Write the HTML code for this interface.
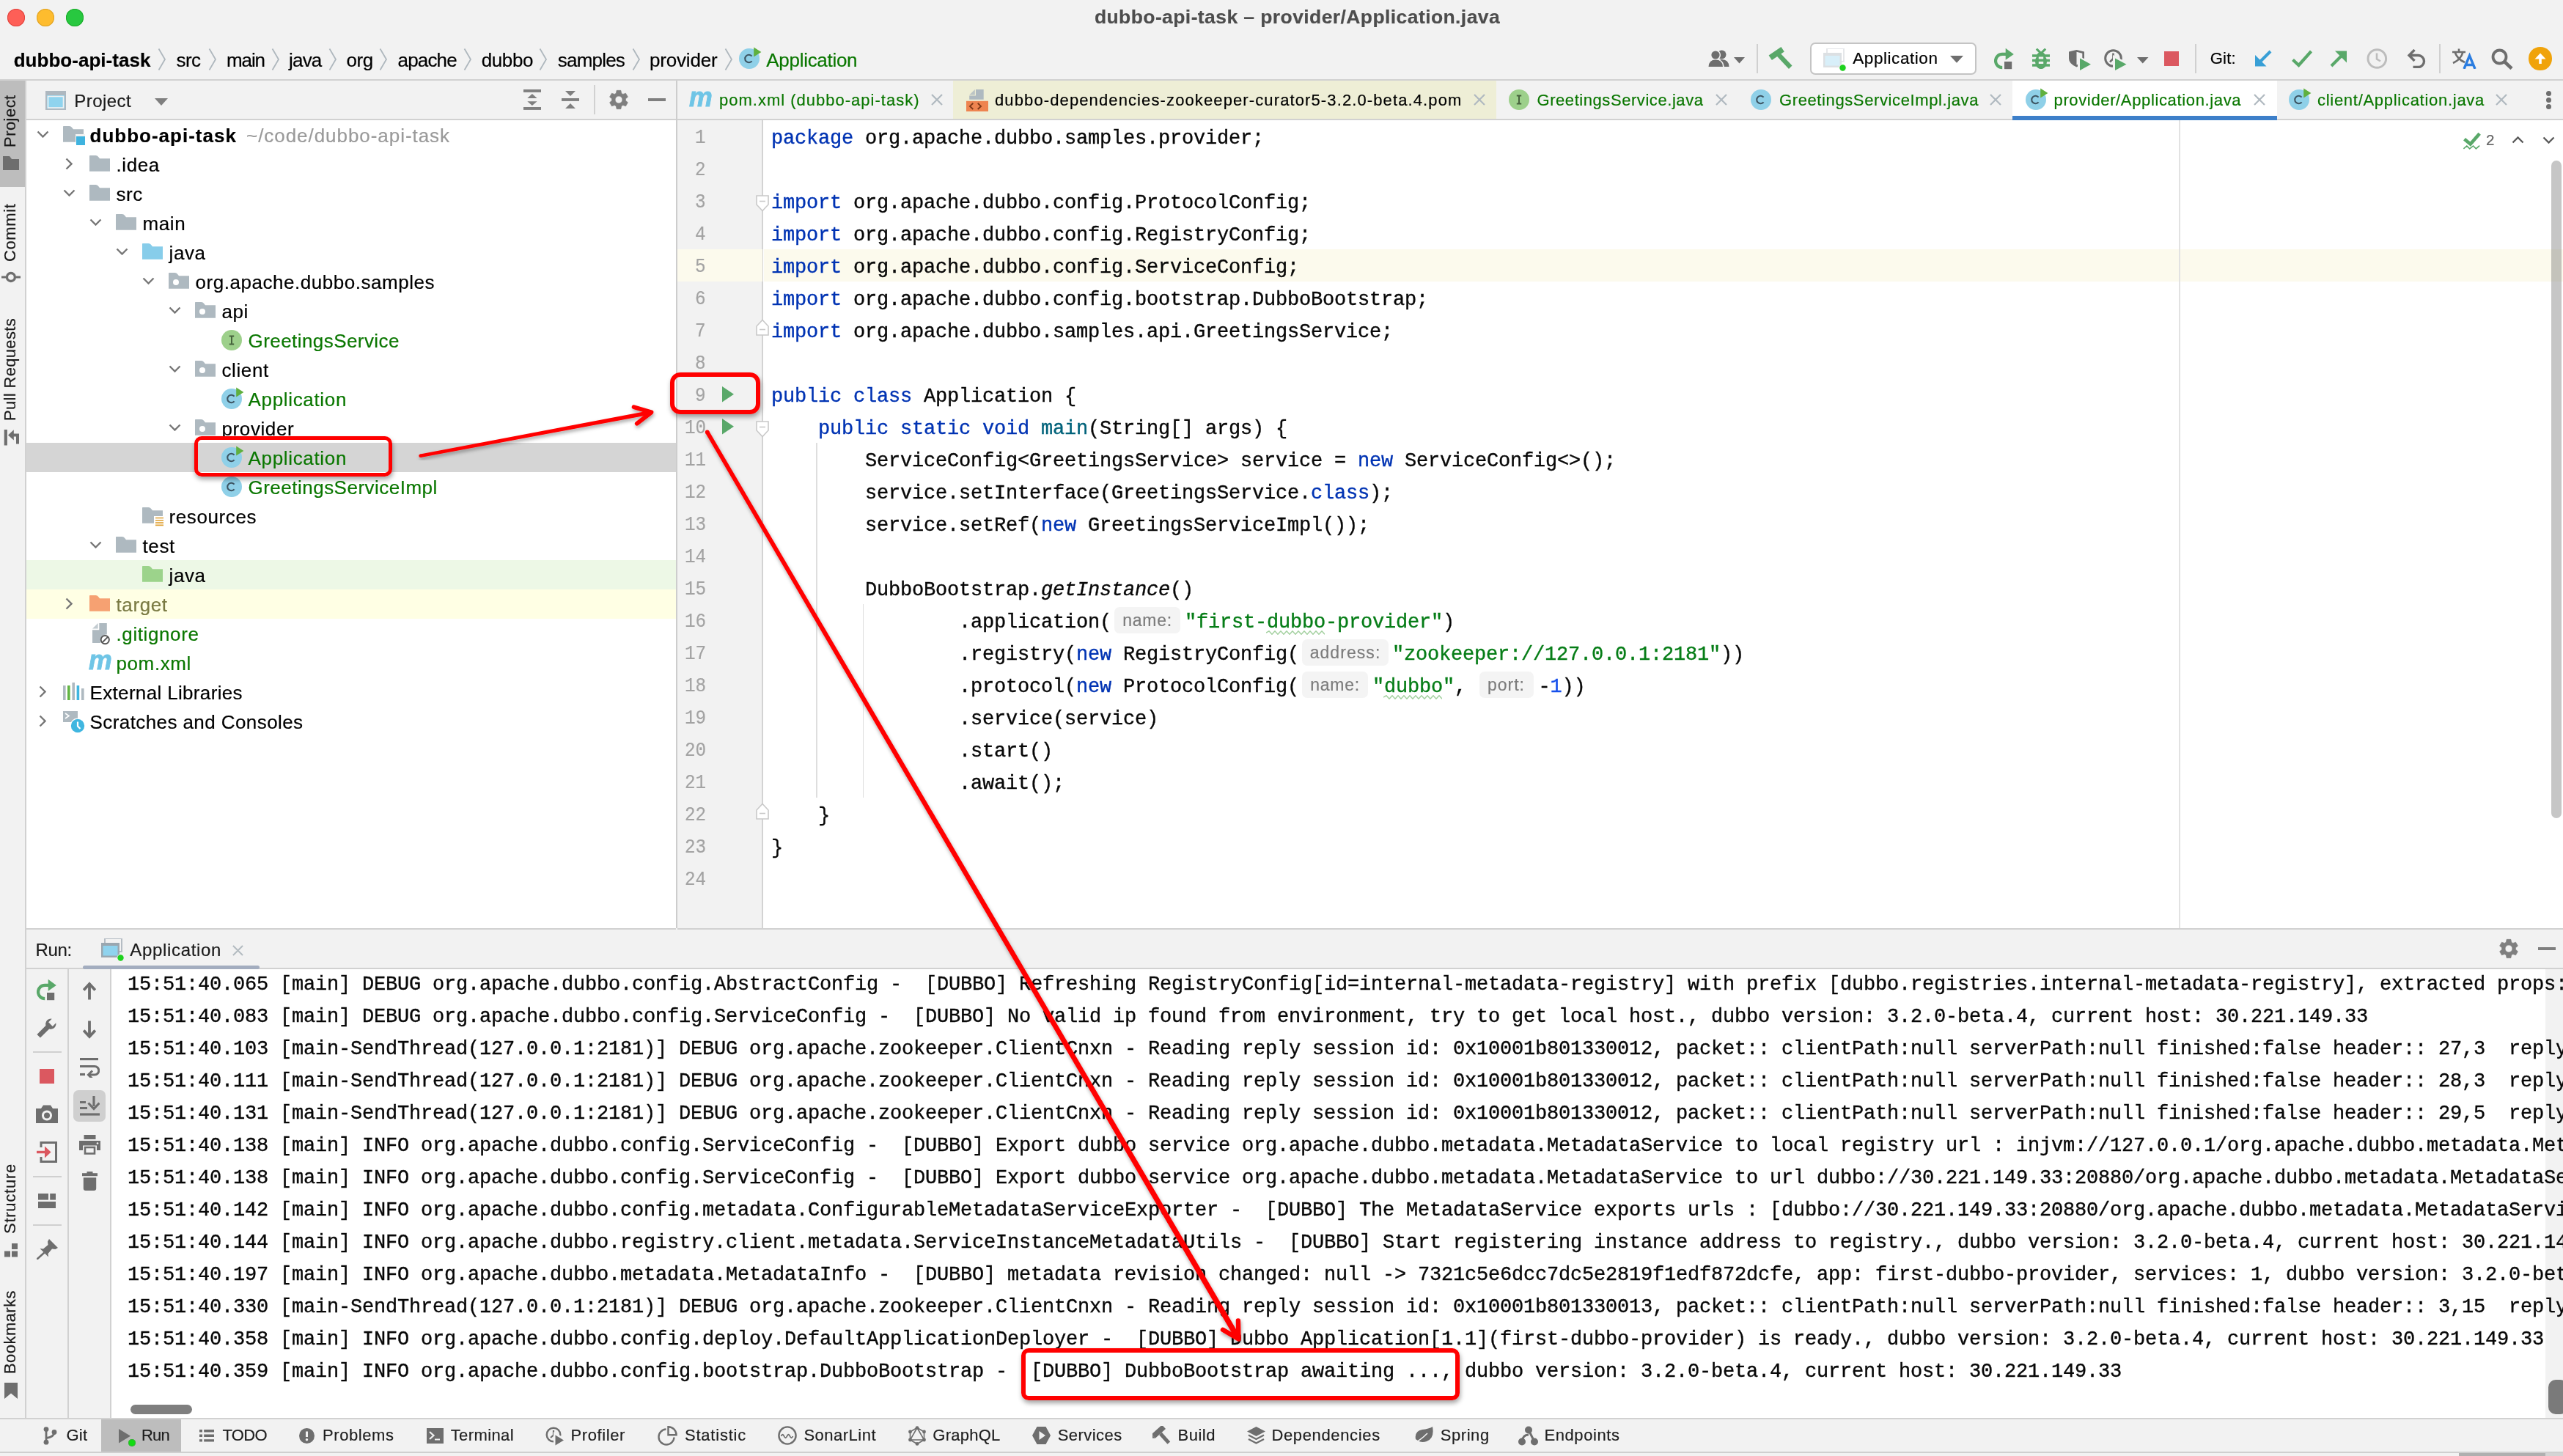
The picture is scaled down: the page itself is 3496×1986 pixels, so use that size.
<!DOCTYPE html>
<html><head><meta charset="utf-8"><title>dubbo-api-task</title>
<style>
html,body{margin:0;padding:0;background:#f2f2f2;}
#r{position:relative;width:3496px;height:1986px;overflow:hidden;background:#f2f2f2;font-family:"Liberation Sans", sans-serif;will-change:transform;}
#r div,#r span,#r svg{position:absolute;}
#r span{white-space:pre;}
.s{font-family:"Liberation Sans", sans-serif;-webkit-text-stroke:0.2px;}
.m{font-family:"Liberation Mono", monospace;-webkit-text-stroke:0.36px;}
</style></head><body><div id="r">
<div style="left:36px;top:164px;width:886px;height:1102px;background:#fff;"></div>
<div style="left:924px;top:164px;width:2572px;height:1102px;background:#fff;"></div>
<div style="left:152px;top:1322px;width:3344px;height:612px;background:#fff;"></div>
<div style="left:10px;top:12px;width:24px;height:24px;border-radius:50%;background:#fe5f57;box-shadow:inset 0 0 0 1px #e0443e;"></div>
<div style="left:50px;top:12px;width:24px;height:24px;border-radius:50%;background:#febc2e;box-shadow:inset 0 0 0 1px #dea123;"></div>
<div style="left:90px;top:12px;width:24px;height:24px;border-radius:50%;background:#28c840;box-shadow:inset 0 0 0 1px #1aab29;"></div>
<span class="s" style="font-size:26.5px;line-height:26.5px;color:#4d4d4d;letter-spacing:0.410px;font-weight:bold;left:1492.9px;top:9.77px;">dubbo-api-task – provider/Application.java</span>
<span class="s" style="font-size:26px;line-height:26px;color:#000;letter-spacing:0.033px;font-weight:bold;left:18.7px;top:68.69px;">dubbo-api-task</span>
<span class="s" style="font-size:26px;line-height:26px;color:#000;letter-spacing:-0.557px;left:240.5px;top:68.69px;">src</span>
<span class="s" style="font-size:26px;line-height:26px;color:#000;letter-spacing:-1.090px;left:309px;top:68.69px;">main</span>
<span class="s" style="font-size:26px;line-height:26px;color:#000;letter-spacing:-0.801px;left:394px;top:68.69px;">java</span>
<span class="s" style="font-size:26px;line-height:26px;color:#000;letter-spacing:-0.459px;left:472.5px;top:68.69px;">org</span>
<span class="s" style="font-size:26px;line-height:26px;color:#000;letter-spacing:-0.819px;left:542.5px;top:68.69px;">apache</span>
<span class="s" style="font-size:26px;line-height:26px;color:#000;letter-spacing:-0.422px;left:656.8px;top:68.69px;">dubbo</span>
<span class="s" style="font-size:26px;line-height:26px;color:#000;letter-spacing:-0.804px;left:760.8px;top:68.69px;">samples</span>
<span class="s" style="font-size:26px;line-height:26px;color:#000;letter-spacing:-0.180px;left:886px;top:68.69px;">provider</span>
<svg style="left:215px;top:65px;" width="12" height="32" viewBox="0 0 12 32"><path d="M1.5 1.5 L10 16 L1.5 30.5" fill="none" stroke="#aeb7bd" stroke-width="1.8"/></svg>
<svg style="left:283.5px;top:65px;" width="12" height="32" viewBox="0 0 12 32"><path d="M1.5 1.5 L10 16 L1.5 30.5" fill="none" stroke="#aeb7bd" stroke-width="1.8"/></svg>
<svg style="left:369.5px;top:65px;" width="12" height="32" viewBox="0 0 12 32"><path d="M1.5 1.5 L10 16 L1.5 30.5" fill="none" stroke="#aeb7bd" stroke-width="1.8"/></svg>
<svg style="left:447.5px;top:65px;" width="12" height="32" viewBox="0 0 12 32"><path d="M1.5 1.5 L10 16 L1.5 30.5" fill="none" stroke="#aeb7bd" stroke-width="1.8"/></svg>
<svg style="left:517px;top:65px;" width="12" height="32" viewBox="0 0 12 32"><path d="M1.5 1.5 L10 16 L1.5 30.5" fill="none" stroke="#aeb7bd" stroke-width="1.8"/></svg>
<svg style="left:631.5px;top:65px;" width="12" height="32" viewBox="0 0 12 32"><path d="M1.5 1.5 L10 16 L1.5 30.5" fill="none" stroke="#aeb7bd" stroke-width="1.8"/></svg>
<svg style="left:734.5px;top:65px;" width="12" height="32" viewBox="0 0 12 32"><path d="M1.5 1.5 L10 16 L1.5 30.5" fill="none" stroke="#aeb7bd" stroke-width="1.8"/></svg>
<svg style="left:861.5px;top:65px;" width="12" height="32" viewBox="0 0 12 32"><path d="M1.5 1.5 L10 16 L1.5 30.5" fill="none" stroke="#aeb7bd" stroke-width="1.8"/></svg>
<svg style="left:987.5px;top:65px;" width="12" height="32" viewBox="0 0 12 32"><path d="M1.5 1.5 L10 16 L1.5 30.5" fill="none" stroke="#aeb7bd" stroke-width="1.8"/></svg>
<svg style="left:1006px;top:63px;" width="34" height="34" viewBox="0 0 34 34"><circle cx="16" cy="17" r="14" fill="#8fd0e8"/><path d="M19.6 13.6 A5.3 5.3 0 1 0 19.6 20.4" fill="none" stroke="#3d5563" stroke-width="2.1"/><path d="M22.2 1.6 L32.4 8 L22.2 14.4 Z" fill="#5fb03f"/></svg>
<span class="s" style="font-size:26px;line-height:26px;color:#0a7700;letter-spacing:-0.291px;left:1045.3px;top:68.69px;">Application</span>
<div style="left:0px;top:108px;width:3496px;height:2px;background:#d1d1d1;"></div>
<div style="left:0px;top:110px;width:34px;height:1825px;background:#f2f2f2;"></div>
<div style="left:34px;top:110px;width:2px;height:1825px;background:#d1d1d1;"></div>
<div style="left:0px;top:110px;width:34px;height:145px;background:#bdbdbd;"></div>
<span class="s" style="font-size:22px;line-height:22px;color:#1a1a1a;letter-spacing:0.459px;left:22.4px;top:200.6px;transform-origin:0 0;transform:rotate(-90deg) translate(0,-18.62px);">Project</span>
<span class="s" style="font-size:22px;line-height:22px;color:#1a1a1a;letter-spacing:0.620px;left:22.4px;top:356.5px;transform-origin:0 0;transform:rotate(-90deg) translate(0,-18.62px);">Commit</span>
<span class="s" style="font-size:22px;line-height:22px;color:#1a1a1a;letter-spacing:0.327px;left:22.4px;top:574px;transform-origin:0 0;transform:rotate(-90deg) translate(0,-18.62px);">Pull Requests</span>
<span class="s" style="font-size:22px;line-height:22px;color:#1a1a1a;letter-spacing:0.748px;left:22.4px;top:1682.5px;transform-origin:0 0;transform:rotate(-90deg) translate(0,-18.62px);">Structure</span>
<span class="s" style="font-size:22px;line-height:22px;color:#1a1a1a;letter-spacing:0.439px;left:22.4px;top:1874px;transform-origin:0 0;transform:rotate(-90deg) translate(0,-18.62px);">Bookmarks</span>
<svg style="left:4px;top:213px;" width="24" height="20" viewBox="0 0 24 20"><path d="M0 0 H9 L12 4 H22 V19 H0 Z" fill="#6e6e6e"/></svg>
<svg style="left:1px;top:369px;" width="30" height="18" viewBox="0 0 30 18"><circle cx="13.9" cy="9" r="5.5" fill="none" stroke="#6e6e6e" stroke-width="3.4"/><path d="M1 9 H7 M21 9 H27" stroke="#6e6e6e" stroke-width="3.2"/></svg>
<svg style="left:5px;top:586px;" width="24" height="23" viewBox="0 0 24 23"><rect x="0.7" y="0" width="4.2" height="21.5" fill="#6e6e6e"/><path d="M6 7.4 L13.8 0.2 V14.6 Z" fill="#6e6e6e"/><path d="M13 7.4 H19 V19.5" fill="none" stroke="#6e6e6e" stroke-width="4"/></svg>
<svg style="left:6px;top:1696px;" width="19" height="19" viewBox="0 0 19 19"><rect x="10" y="0" width="8" height="8" fill="#6e6e6e"/><rect x="0" y="10.5" width="8" height="8" fill="#6e6e6e"/><rect x="10" y="10.5" width="8" height="8" fill="#6e6e6e"/></svg>
<svg style="left:6px;top:1886px;" width="18" height="22" viewBox="0 0 18 22"><path d="M0 0 H18 V22 L9 14.5 L0 22 Z" fill="#6e6e6e"/></svg>
<div style="left:36px;top:110px;width:886px;height:52px;background:#f2f2f2;"></div>
<div style="left:36px;top:162px;width:886px;height:2px;background:#d1d1d1;"></div>
<div style="left:922px;top:110px;width:2px;height:1156px;background:#cdcdcd;"></div>
<svg style="left:62px;top:124px;" width="28" height="26" viewBox="0 0 28 26"><rect x="1" y="1" width="26" height="24" fill="#8fd3ee" stroke="#aeb8c0" stroke-width="2"/><rect x="1" y="1" width="26" height="5" fill="#aeb8c0"/><rect x="3.5" y="7.5" width="21" height="15.5" fill="none" stroke="#f2f2f2" stroke-width="1.6"/></svg>
<span class="s" style="font-size:24px;line-height:24px;color:#1a1a1a;letter-spacing:0.471px;left:101.2px;top:125.58px;">Project</span>
<svg style="left:211px;top:134px;" width="18" height="10" viewBox="0 0 18 10"><path d="M0 0 H18 L9 10 Z" fill="#7f7f7f"/></svg>
<svg style="left:714px;top:122px;" width="24" height="28" viewBox="0 0 24 28"><rect x="0" y="0" width="24" height="3.9" fill="#7f7f7f"/><rect x="0" y="24" width="24" height="3.9" fill="#7f7f7f"/><path d="M11.9 6 L18.6 11.9 H5.3 Z M11.9 21.9 L18.6 16.2 H5.3 Z" fill="#7f7f7f"/></svg>
<svg style="left:766px;top:122px;" width="24" height="28" viewBox="0 0 24 28"><rect x="0" y="12" width="24" height="3.9" fill="#7f7f7f"/><path d="M12 8.9 L19 2 H5 Z M12 19.1 L19 25.9 H5 Z" fill="#7f7f7f"/></svg>
<div style="left:810px;top:116px;width:2px;height:40px;background:#d1d1d1;"></div>
<svg style="left:830px;top:121.9px;" width="28" height="28" viewBox="0 0 28 28"><path d="M10.30 5.25 L11.12 1.32 L16.88 1.32 L17.70 5.25 L19.73 6.42 L23.54 5.17 L26.42 10.15 L23.43 12.83 L23.43 15.17 L26.42 17.85 L23.54 22.83 L19.73 21.58 L17.70 22.75 L16.88 26.68 L11.12 26.68 L10.30 22.75 L8.27 21.58 L4.46 22.83 L1.58 17.85 L4.57 15.17 L4.57 12.83 L1.58 10.15 L4.46 5.17 L8.27 6.42 Z M18.9 14 A4.9 4.9 0 1 0 9.1 14 A4.9 4.9 0 1 0 18.9 14 Z" fill="#7f7f7f" fill-rule="evenodd" stroke="#7f7f7f" stroke-width="0.6" stroke-linejoin="round"/></svg>
<div style="left:884px;top:134px;width:24px;height:4px;background:#7f7f7f;"></div>
<div style="left:36px;top:604px;width:886px;height:40px;background:#d5d5d5;"></div>
<div style="left:36px;top:764px;width:886px;height:40px;background:#edf8e6;"></div>
<div style="left:36px;top:804px;width:886px;height:40px;background:#ffffe4;"></div>
<svg style="left:49.5px;top:178px;" width="17" height="10" viewBox="0 0 17 10"><path d="M1.5 1.5 L8.5 8.5 L15.5 1.5" fill="none" stroke="#767676" stroke-width="2.4"/></svg>
<svg style="left:86px;top:172px;" width="31" height="27" viewBox="0 0 31 27"><path d="M0 0.8 Q0 0 0.8 0 H8.5 Q10.8 0 12.2 2 L14 4.2 H28 V21.8 H0 Z" fill="#aeb9c0"/><rect x="17" y="11" width="13" height="13" fill="#f2f2f2"/><rect x="18" y="14" width="12" height="12" fill="#3fb3df"/></svg>
<span class="s" style="font-size:26px;line-height:26px;color:#000;letter-spacing:1.004px;font-weight:bold;left:122.5px;top:171.99px;">dubbo-api-task</span>
<svg style="left:89px;top:215px;" width="10" height="17" viewBox="0 0 10 17"><path d="M1.5 1.5 L8.5 8.5 L1.5 15.5" fill="none" stroke="#767676" stroke-width="2.4"/></svg>
<svg style="left:122px;top:212px;" width="28" height="22" viewBox="0 0 28 22"><path d="M0 0.8 Q0 0 0.8 0 H8.5 Q10.8 0 12.2 2 L14 4.2 H28 V21.8 H0 Z" fill="#aeb9c0"/></svg>
<span class="s" style="font-size:26px;line-height:26px;color:#000;left:158.5px;top:211.99px;letter-spacing:0.6px;">.idea</span>
<svg style="left:85.5px;top:258px;" width="17" height="10" viewBox="0 0 17 10"><path d="M1.5 1.5 L8.5 8.5 L15.5 1.5" fill="none" stroke="#767676" stroke-width="2.4"/></svg>
<svg style="left:122px;top:252px;" width="28" height="22" viewBox="0 0 28 22"><path d="M0 0.8 Q0 0 0.8 0 H8.5 Q10.8 0 12.2 2 L14 4.2 H28 V21.8 H0 Z" fill="#aeb9c0"/></svg>
<span class="s" style="font-size:26px;line-height:26px;color:#000;left:158.5px;top:251.99px;letter-spacing:0.6px;">src</span>
<svg style="left:121.5px;top:298px;" width="17" height="10" viewBox="0 0 17 10"><path d="M1.5 1.5 L8.5 8.5 L15.5 1.5" fill="none" stroke="#767676" stroke-width="2.4"/></svg>
<svg style="left:158px;top:292px;" width="28" height="22" viewBox="0 0 28 22"><path d="M0 0.8 Q0 0 0.8 0 H8.5 Q10.8 0 12.2 2 L14 4.2 H28 V21.8 H0 Z" fill="#aeb9c0"/></svg>
<span class="s" style="font-size:26px;line-height:26px;color:#000;left:194.5px;top:291.99px;letter-spacing:0.6px;">main</span>
<svg style="left:157.5px;top:338px;" width="17" height="10" viewBox="0 0 17 10"><path d="M1.5 1.5 L8.5 8.5 L15.5 1.5" fill="none" stroke="#767676" stroke-width="2.4"/></svg>
<svg style="left:194px;top:332px;" width="28" height="22" viewBox="0 0 28 22"><path d="M0 0.8 Q0 0 0.8 0 H8.5 Q10.8 0 12.2 2 L14 4.2 H28 V21.8 H0 Z" fill="#87cdea"/></svg>
<span class="s" style="font-size:26px;line-height:26px;color:#000;left:230.5px;top:331.99px;letter-spacing:0.6px;">java</span>
<svg style="left:193.5px;top:378px;" width="17" height="10" viewBox="0 0 17 10"><path d="M1.5 1.5 L8.5 8.5 L15.5 1.5" fill="none" stroke="#767676" stroke-width="2.4"/></svg>
<svg style="left:230px;top:372px;" width="28" height="22" viewBox="0 0 28 22"><path d="M0 0.8 Q0 0 0.8 0 H8.5 Q10.8 0 12.2 2 L14 4.2 H28 V21.8 H0 Z" fill="#aeb9c0"/><circle cx="10" cy="13" r="4" fill="#fff"/></svg>
<span class="s" style="font-size:26px;line-height:26px;color:#000;letter-spacing:0.535px;left:266.5px;top:371.99px;">org.apache.dubbo.samples</span>
<svg style="left:229.5px;top:418px;" width="17" height="10" viewBox="0 0 17 10"><path d="M1.5 1.5 L8.5 8.5 L15.5 1.5" fill="none" stroke="#767676" stroke-width="2.4"/></svg>
<svg style="left:266px;top:412px;" width="28" height="22" viewBox="0 0 28 22"><path d="M0 0.8 Q0 0 0.8 0 H8.5 Q10.8 0 12.2 2 L14 4.2 H28 V21.8 H0 Z" fill="#aeb9c0"/><circle cx="10" cy="13" r="4" fill="#fff"/></svg>
<span class="s" style="font-size:26px;line-height:26px;color:#000;left:302.5px;top:411.99px;letter-spacing:0.6px;">api</span>
<svg style="left:300.2px;top:446.7px;" width="34" height="34" viewBox="0 0 34 34"><circle cx="16" cy="17" r="14" fill="#9dd08b"/><path d="M12.8 11.6h6.4M12.8 22.4h6.4M16 11.6v10.8" stroke="#47633d" stroke-width="2" fill="none"/></svg>
<span class="s" style="font-size:26px;line-height:26px;color:#0a7700;letter-spacing:0.436px;left:338.5px;top:451.99px;">GreetingsService</span>
<svg style="left:229.5px;top:498px;" width="17" height="10" viewBox="0 0 17 10"><path d="M1.5 1.5 L8.5 8.5 L15.5 1.5" fill="none" stroke="#767676" stroke-width="2.4"/></svg>
<svg style="left:266px;top:492px;" width="28" height="22" viewBox="0 0 28 22"><path d="M0 0.8 Q0 0 0.8 0 H8.5 Q10.8 0 12.2 2 L14 4.2 H28 V21.8 H0 Z" fill="#aeb9c0"/><circle cx="10" cy="13" r="4" fill="#fff"/></svg>
<span class="s" style="font-size:26px;line-height:26px;color:#000;left:302.5px;top:491.99px;letter-spacing:0.6px;">client</span>
<svg style="left:300.2px;top:526.7px;" width="34" height="34" viewBox="0 0 34 34"><circle cx="16" cy="17" r="14" fill="#8fd0e8"/><path d="M19.6 13.6 A5.3 5.3 0 1 0 19.6 20.4" fill="none" stroke="#3d5563" stroke-width="2.1"/><path d="M22.2 1.6 L32.4 8 L22.2 14.4 Z" fill="#5fb03f"/></svg>
<span class="s" style="font-size:26px;line-height:26px;color:#0a7700;letter-spacing:0.672px;left:338.5px;top:531.99px;">Application</span>
<svg style="left:229.5px;top:578px;" width="17" height="10" viewBox="0 0 17 10"><path d="M1.5 1.5 L8.5 8.5 L15.5 1.5" fill="none" stroke="#767676" stroke-width="2.4"/></svg>
<svg style="left:266px;top:572px;" width="28" height="22" viewBox="0 0 28 22"><path d="M0 0.8 Q0 0 0.8 0 H8.5 Q10.8 0 12.2 2 L14 4.2 H28 V21.8 H0 Z" fill="#aeb9c0"/><circle cx="10" cy="13" r="4" fill="#fff"/></svg>
<span class="s" style="font-size:26px;line-height:26px;color:#000;left:302.5px;top:571.99px;letter-spacing:0.6px;">provider</span>
<svg style="left:300.2px;top:606.7px;" width="34" height="34" viewBox="0 0 34 34"><circle cx="16" cy="17" r="14" fill="#8fd0e8"/><path d="M19.6 13.6 A5.3 5.3 0 1 0 19.6 20.4" fill="none" stroke="#3d5563" stroke-width="2.1"/><path d="M22.2 1.6 L32.4 8 L22.2 14.4 Z" fill="#5fb03f"/></svg>
<span class="s" style="font-size:26px;line-height:26px;color:#0a7700;letter-spacing:0.672px;left:338.5px;top:611.99px;">Application</span>
<svg style="left:300.2px;top:646.7px;" width="34" height="34" viewBox="0 0 34 34"><circle cx="16" cy="17" r="14" fill="#8fd0e8"/><path d="M19.6 13.6 A5.3 5.3 0 1 0 19.6 20.4" fill="none" stroke="#3d5563" stroke-width="2.1"/></svg>
<span class="s" style="font-size:26px;line-height:26px;color:#0a7700;letter-spacing:0.488px;left:338.5px;top:651.99px;">GreetingsServiceImpl</span>
<svg style="left:194px;top:692px;" width="31" height="27" viewBox="0 0 31 27"><path d="M0 0.8 Q0 0 0.8 0 H8.5 Q10.8 0 12.2 2 L14 4.2 H28 V21.8 H0 Z" fill="#aeb9c0"/><rect x="16" y="12" width="14" height="14" fill="#fff"/><g stroke="#e0a030" stroke-width="1.6"><path d="M18 14.5h11M18 17.8h11M18 21.1h11M18 24.4h11"/></g></svg>
<span class="s" style="font-size:26px;line-height:26px;color:#000;left:230.5px;top:691.99px;letter-spacing:0.6px;">resources</span>
<svg style="left:121.5px;top:738px;" width="17" height="10" viewBox="0 0 17 10"><path d="M1.5 1.5 L8.5 8.5 L15.5 1.5" fill="none" stroke="#767676" stroke-width="2.4"/></svg>
<svg style="left:158px;top:732px;" width="28" height="22" viewBox="0 0 28 22"><path d="M0 0.8 Q0 0 0.8 0 H8.5 Q10.8 0 12.2 2 L14 4.2 H28 V21.8 H0 Z" fill="#aeb9c0"/></svg>
<span class="s" style="font-size:26px;line-height:26px;color:#000;left:194.5px;top:731.99px;letter-spacing:0.6px;">test</span>
<svg style="left:194px;top:772px;" width="28" height="22" viewBox="0 0 28 22"><path d="M0 0.8 Q0 0 0.8 0 H8.5 Q10.8 0 12.2 2 L14 4.2 H28 V21.8 H0 Z" fill="#9cd38b"/></svg>
<span class="s" style="font-size:26px;line-height:26px;color:#000;left:230.5px;top:771.99px;letter-spacing:0.6px;">java</span>
<svg style="left:89px;top:815px;" width="10" height="17" viewBox="0 0 10 17"><path d="M1.5 1.5 L8.5 8.5 L1.5 15.5" fill="none" stroke="#767676" stroke-width="2.4"/></svg>
<svg style="left:122px;top:812px;" width="28" height="22" viewBox="0 0 28 22"><path d="M0 0.8 Q0 0 0.8 0 H8.5 Q10.8 0 12.2 2 L14 4.2 H28 V21.8 H0 Z" fill="#f6a172"/></svg>
<span class="s" style="font-size:26px;line-height:26px;color:#7a7a43;left:158.5px;top:811.99px;letter-spacing:0.6px;">target</span>
<svg style="left:126px;top:850px;" width="28" height="30" viewBox="0 0 28 30"><path d="M9.3 0 H19.8 V15.5 A8.3 8.3 0 0 0 11.5 27 H0 V9.3 H9.3 Z" fill="#aeb9c0"/><path d="M0 7.6 L7.6 0 V7.6 Z" fill="#aeb9c0" opacity="0.75"/><circle cx="17.3" cy="22.6" r="5.6" fill="none" stroke="#555" stroke-width="1.9"/><path d="M13.4 26.5 L21.2 18.7" stroke="#555" stroke-width="1.9"/></svg>
<span class="s" style="font-size:26px;line-height:26px;color:#0a7700;left:158.5px;top:851.99px;letter-spacing:0.6px;">.gitignore</span>
<span class="s" style="font-size:37.5px;line-height:37.5px;color:#6fc5e6;font-weight:bold;font-style:italic;left:120.5px;top:882.46px;transform-origin:0 0;transform:scaleX(0.95);-webkit-text-stroke:0.9px #6fc5e6;">m</span>
<span class="s" style="font-size:26px;line-height:26px;color:#0a7700;left:158.5px;top:891.99px;letter-spacing:0.6px;">pom.xml</span>
<svg style="left:53px;top:935px;" width="10" height="17" viewBox="0 0 10 17"><path d="M1.5 1.5 L8.5 8.5 L1.5 15.5" fill="none" stroke="#767676" stroke-width="2.4"/></svg>
<svg style="left:86px;top:931px;" width="29" height="24" viewBox="0 0 29 24"><rect x="0" y="4" width="3.6" height="20" fill="#aeb9c0"/><rect x="6" y="4" width="3.6" height="20" fill="#62b543"/><rect x="12.4" y="0" width="3.6" height="24" fill="#aeb9c0"/><rect x="18.6" y="4" width="3.6" height="20" fill="#40b6e0"/><rect x="25" y="8" width="3.6" height="16" fill="#aeb9c0"/></svg>
<span class="s" style="font-size:26px;line-height:26px;color:#000;letter-spacing:0.338px;left:122.5px;top:931.99px;">External Libraries</span>
<svg style="left:53px;top:975px;" width="10" height="17" viewBox="0 0 10 17"><path d="M1.5 1.5 L8.5 8.5 L1.5 15.5" fill="none" stroke="#767676" stroke-width="2.4"/></svg>
<svg style="left:86px;top:970px;" width="31" height="31" viewBox="0 0 31 31"><rect x="0" y="0" width="20" height="15" fill="#aeb9c0"/><path d="M3 3 L8 6.5 L3 10" fill="none" stroke="#fff" stroke-width="1.6"/><circle cx="20" cy="20" r="10.5" fill="#fff"/><circle cx="20" cy="20" r="9.2" fill="#40b6e0"/><path d="M20 14.5 V20.5 L23.5 24" fill="none" stroke="#fff" stroke-width="2.2"/></svg>
<span class="s" style="font-size:26px;line-height:26px;color:#000;letter-spacing:0.417px;left:122.5px;top:971.99px;">Scratches and Consoles</span>
<span class="s" style="font-size:26px;line-height:26px;color:#9a9a9a;letter-spacing:0.952px;left:336px;top:171.99px;">~/code/dubbo-api-task</span>
<div style="left:924px;top:110px;width:2572px;height:52px;background:#f2f2f2;"></div>
<span class="s" style="font-size:37.5px;line-height:37.5px;color:#6fc5e6;font-weight:bold;font-style:italic;left:939.5px;top:114.46px;transform-origin:0 0;transform:scaleX(0.95);-webkit-text-stroke:0.9px #6fc5e6;">m</span>
<span class="s" style="font-size:22px;line-height:22px;color:#0a7700;letter-spacing:1.003px;left:981px;top:126.38px;">pom.xml (dubbo-api-task)</span>
<svg style="left:1270px;top:128px;" width="16" height="16" viewBox="0 0 16 16"><path d="M1 1 L15 15 M15 1 L1 15" stroke="#b0b9c0" stroke-width="2.2" fill="none"/></svg>
<div style="left:1300px;top:110px;width:741px;height:52px;background:#eeeed6;"></div>
<svg style="left:1318px;top:122px;" width="30" height="30" viewBox="0 0 30 30"><path d="M13 0 H23.7 V13.7 H4.2 V8.6 H13 Z" fill="#aeb9c0"/><path d="M4.2 7.4 L11.8 0 V7.4 Z" fill="#aeb9c0" opacity="0.8"/><rect x="0" y="15.8" width="30" height="14.2" fill="#ee8450"/><path d="M9.3 18.8 L5 22.9 L9.3 27 M15.7 18.8 L20 22.9 L15.7 27" fill="none" stroke="#6b2c0e" stroke-width="1.9" opacity="0.85"/></svg>
<span class="s" style="font-size:22px;line-height:22px;color:#000;letter-spacing:1.115px;left:1357px;top:126.38px;">dubbo-dependencies-zookeeper-curator5-3.2.0-beta.4.pom</span>
<svg style="left:2010px;top:128px;" width="16" height="16" viewBox="0 0 16 16"><path d="M1 1 L15 15 M15 1 L1 15" stroke="#b0b9c0" stroke-width="2.2" fill="none"/></svg>
<svg style="left:2055.7px;top:119px;" width="34" height="34" viewBox="0 0 34 34"><circle cx="16" cy="17" r="14" fill="#9dd08b"/><path d="M12.8 11.6h6.4M12.8 22.4h6.4M16 11.6v10.8" stroke="#47633d" stroke-width="2" fill="none"/></svg>
<span class="s" style="font-size:22px;line-height:22px;color:#0a7700;letter-spacing:0.561px;left:2096.5px;top:126.38px;">GreetingsService.java</span>
<svg style="left:2340px;top:128px;" width="16" height="16" viewBox="0 0 16 16"><path d="M1 1 L15 15 M15 1 L1 15" stroke="#b0b9c0" stroke-width="2.2" fill="none"/></svg>
<svg style="left:2386px;top:119px;" width="34" height="34" viewBox="0 0 34 34"><circle cx="16" cy="17" r="14" fill="#8fd0e8"/><path d="M19.6 13.6 A5.3 5.3 0 1 0 19.6 20.4" fill="none" stroke="#3d5563" stroke-width="2.1"/></svg>
<span class="s" style="font-size:22px;line-height:22px;color:#0a7700;letter-spacing:0.609px;left:2427px;top:126.38px;">GreetingsServiceImpl.java</span>
<svg style="left:2714px;top:128px;" width="16" height="16" viewBox="0 0 16 16"><path d="M1 1 L15 15 M15 1 L1 15" stroke="#b0b9c0" stroke-width="2.2" fill="none"/></svg>
<div style="left:2745px;top:110px;width:361px;height:52px;background:#fff;"></div>
<svg style="left:2760.5px;top:119px;" width="34" height="34" viewBox="0 0 34 34"><circle cx="16" cy="17" r="14" fill="#8fd0e8"/><path d="M19.6 13.6 A5.3 5.3 0 1 0 19.6 20.4" fill="none" stroke="#3d5563" stroke-width="2.1"/><path d="M22.2 1.6 L32.4 8 L22.2 14.4 Z" fill="#5fb03f"/></svg>
<span class="s" style="font-size:22px;line-height:22px;color:#0a7700;letter-spacing:0.640px;left:2801.5px;top:126.38px;">provider/Application.java</span>
<svg style="left:3074.3px;top:128px;" width="16" height="16" viewBox="0 0 16 16"><path d="M1 1 L15 15 M15 1 L1 15" stroke="#b0b9c0" stroke-width="2.2" fill="none"/></svg>
<svg style="left:3120px;top:119px;" width="34" height="34" viewBox="0 0 34 34"><circle cx="16" cy="17" r="14" fill="#8fd0e8"/><path d="M19.6 13.6 A5.3 5.3 0 1 0 19.6 20.4" fill="none" stroke="#3d5563" stroke-width="2.1"/><path d="M22.2 1.6 L32.4 8 L22.2 14.4 Z" fill="#5fb03f"/></svg>
<span class="s" style="font-size:22px;line-height:22px;color:#0a7700;letter-spacing:0.714px;left:3161px;top:126.38px;">client/Application.java</span>
<svg style="left:3404.3px;top:128px;" width="16" height="16" viewBox="0 0 16 16"><path d="M1 1 L15 15 M15 1 L1 15" stroke="#b0b9c0" stroke-width="2.2" fill="none"/></svg>
<div style="left:3473.3px;top:124.0px;width:7px;height:7px;border-radius:50%;background:#6e6e6e;"></div>
<div style="left:3473.3px;top:132.8px;width:7px;height:7px;border-radius:50%;background:#6e6e6e;"></div>
<div style="left:3473.3px;top:141.5px;width:7px;height:7px;border-radius:50%;background:#6e6e6e;"></div>
<div style="left:924px;top:162px;width:2572px;height:2px;background:#d1d1d1;"></div>
<div style="left:2745px;top:158px;width:361px;height:6px;background:#3d7fc9;"></div>
<div style="left:924px;top:164px;width:116px;height:1102px;background:#f2f2f2;"></div>
<div style="left:1039px;top:164px;width:2px;height:1102px;background:#d3d3d3;"></div>
<div style="left:1042px;top:340px;width:2454px;height:44px;background:#fcfaed;"></div>
<div style="left:924px;top:340px;width:116px;height:44px;background:#fcfaed;"></div>
<div style="left:2972px;top:164px;width:2px;height:1102px;background:#e2e2e2;"></div>
<div style="left:1113px;top:604px;width:1.6px;height:484px;background:#dedede;"></div>
<div style="left:1176.5px;top:824px;width:1.6px;height:264px;background:#dedede;"></div>
<span class="m" style="font-size:27px;line-height:27px;color:#a3a3a3;left:948.4px;top:175.40px;transform-origin:0 0;transform:scaleX(0.9);letter-spacing:-0.2026px;-webkit-text-stroke:0.2px;">1</span>
<span class="m" style="font-size:27px;line-height:27px;color:#a3a3a3;left:948.4px;top:219.40px;transform-origin:0 0;transform:scaleX(0.9);letter-spacing:-0.2026px;-webkit-text-stroke:0.2px;">2</span>
<span class="m" style="font-size:27px;line-height:27px;color:#a3a3a3;left:948.4px;top:263.40px;transform-origin:0 0;transform:scaleX(0.9);letter-spacing:-0.2026px;-webkit-text-stroke:0.2px;">3</span>
<span class="m" style="font-size:27px;line-height:27px;color:#a3a3a3;left:948.4px;top:307.40px;transform-origin:0 0;transform:scaleX(0.9);letter-spacing:-0.2026px;-webkit-text-stroke:0.2px;">4</span>
<span class="m" style="font-size:27px;line-height:27px;color:#a3a3a3;left:948.4px;top:351.40px;transform-origin:0 0;transform:scaleX(0.9);letter-spacing:-0.2026px;-webkit-text-stroke:0.2px;">5</span>
<span class="m" style="font-size:27px;line-height:27px;color:#a3a3a3;left:948.4px;top:395.40px;transform-origin:0 0;transform:scaleX(0.9);letter-spacing:-0.2026px;-webkit-text-stroke:0.2px;">6</span>
<span class="m" style="font-size:27px;line-height:27px;color:#a3a3a3;left:948.4px;top:439.40px;transform-origin:0 0;transform:scaleX(0.9);letter-spacing:-0.2026px;-webkit-text-stroke:0.2px;">7</span>
<span class="m" style="font-size:27px;line-height:27px;color:#a3a3a3;left:948.4px;top:483.40px;transform-origin:0 0;transform:scaleX(0.9);letter-spacing:-0.2026px;-webkit-text-stroke:0.2px;">8</span>
<span class="m" style="font-size:27px;line-height:27px;color:#a3a3a3;left:948.4px;top:527.40px;transform-origin:0 0;transform:scaleX(0.9);letter-spacing:-0.2026px;-webkit-text-stroke:0.2px;">9</span>
<span class="m" style="font-size:27px;line-height:27px;color:#a3a3a3;left:934.0px;top:571.40px;transform-origin:0 0;transform:scaleX(0.9);letter-spacing:-0.2026px;-webkit-text-stroke:0.2px;">10</span>
<span class="m" style="font-size:27px;line-height:27px;color:#a3a3a3;left:934.0px;top:615.40px;transform-origin:0 0;transform:scaleX(0.9);letter-spacing:-0.2026px;-webkit-text-stroke:0.2px;">11</span>
<span class="m" style="font-size:27px;line-height:27px;color:#a3a3a3;left:934.0px;top:659.40px;transform-origin:0 0;transform:scaleX(0.9);letter-spacing:-0.2026px;-webkit-text-stroke:0.2px;">12</span>
<span class="m" style="font-size:27px;line-height:27px;color:#a3a3a3;left:934.0px;top:703.40px;transform-origin:0 0;transform:scaleX(0.9);letter-spacing:-0.2026px;-webkit-text-stroke:0.2px;">13</span>
<span class="m" style="font-size:27px;line-height:27px;color:#a3a3a3;left:934.0px;top:747.40px;transform-origin:0 0;transform:scaleX(0.9);letter-spacing:-0.2026px;-webkit-text-stroke:0.2px;">14</span>
<span class="m" style="font-size:27px;line-height:27px;color:#a3a3a3;left:934.0px;top:791.40px;transform-origin:0 0;transform:scaleX(0.9);letter-spacing:-0.2026px;-webkit-text-stroke:0.2px;">15</span>
<span class="m" style="font-size:27px;line-height:27px;color:#a3a3a3;left:934.0px;top:835.40px;transform-origin:0 0;transform:scaleX(0.9);letter-spacing:-0.2026px;-webkit-text-stroke:0.2px;">16</span>
<span class="m" style="font-size:27px;line-height:27px;color:#a3a3a3;left:934.0px;top:879.40px;transform-origin:0 0;transform:scaleX(0.9);letter-spacing:-0.2026px;-webkit-text-stroke:0.2px;">17</span>
<span class="m" style="font-size:27px;line-height:27px;color:#a3a3a3;left:934.0px;top:923.40px;transform-origin:0 0;transform:scaleX(0.9);letter-spacing:-0.2026px;-webkit-text-stroke:0.2px;">18</span>
<span class="m" style="font-size:27px;line-height:27px;color:#a3a3a3;left:934.0px;top:967.40px;transform-origin:0 0;transform:scaleX(0.9);letter-spacing:-0.2026px;-webkit-text-stroke:0.2px;">19</span>
<span class="m" style="font-size:27px;line-height:27px;color:#a3a3a3;left:934.0px;top:1011.40px;transform-origin:0 0;transform:scaleX(0.9);letter-spacing:-0.2026px;-webkit-text-stroke:0.2px;">20</span>
<span class="m" style="font-size:27px;line-height:27px;color:#a3a3a3;left:934.0px;top:1055.40px;transform-origin:0 0;transform:scaleX(0.9);letter-spacing:-0.2026px;-webkit-text-stroke:0.2px;">21</span>
<span class="m" style="font-size:27px;line-height:27px;color:#a3a3a3;left:934.0px;top:1099.40px;transform-origin:0 0;transform:scaleX(0.9);letter-spacing:-0.2026px;-webkit-text-stroke:0.2px;">22</span>
<span class="m" style="font-size:27px;line-height:27px;color:#a3a3a3;left:934.0px;top:1143.40px;transform-origin:0 0;transform:scaleX(0.9);letter-spacing:-0.2026px;-webkit-text-stroke:0.2px;">23</span>
<span class="m" style="font-size:27px;line-height:27px;color:#a3a3a3;left:934.0px;top:1187.40px;transform-origin:0 0;transform:scaleX(0.9);letter-spacing:-0.2026px;-webkit-text-stroke:0.2px;">24</span>
<span class="m" style="font-size:27px;line-height:27px;color:#0033b3;left:1052px;top:176.40px;letter-spacing:-0.2026px;">package</span>
<span class="m" style="font-size:27px;line-height:27px;color:#080808;left:1164px;top:176.40px;letter-spacing:-0.2026px;"> org.apache.dubbo.samples.provider;</span>
<span class="m" style="font-size:27px;line-height:27px;color:#0033b3;left:1052px;top:264.40px;letter-spacing:-0.2026px;">import</span>
<span class="m" style="font-size:27px;line-height:27px;color:#080808;left:1148px;top:264.40px;letter-spacing:-0.2026px;"> org.apache.dubbo.config.ProtocolConfig;</span>
<span class="m" style="font-size:27px;line-height:27px;color:#0033b3;left:1052px;top:308.40px;letter-spacing:-0.2026px;">import</span>
<span class="m" style="font-size:27px;line-height:27px;color:#080808;left:1148px;top:308.40px;letter-spacing:-0.2026px;"> org.apache.dubbo.config.RegistryConfig;</span>
<span class="m" style="font-size:27px;line-height:27px;color:#0033b3;left:1052px;top:352.40px;letter-spacing:-0.2026px;">import</span>
<span class="m" style="font-size:27px;line-height:27px;color:#080808;left:1148px;top:352.40px;letter-spacing:-0.2026px;"> org.apache.dubbo.config.ServiceConfig;</span>
<span class="m" style="font-size:27px;line-height:27px;color:#0033b3;left:1052px;top:396.40px;letter-spacing:-0.2026px;">import</span>
<span class="m" style="font-size:27px;line-height:27px;color:#080808;left:1148px;top:396.40px;letter-spacing:-0.2026px;"> org.apache.dubbo.config.bootstrap.DubboBootstrap;</span>
<span class="m" style="font-size:27px;line-height:27px;color:#0033b3;left:1052px;top:440.40px;letter-spacing:-0.2026px;">import</span>
<span class="m" style="font-size:27px;line-height:27px;color:#080808;left:1148px;top:440.40px;letter-spacing:-0.2026px;"> org.apache.dubbo.samples.api.GreetingsService;</span>
<span class="m" style="font-size:27px;line-height:27px;color:#0033b3;left:1052px;top:528.40px;letter-spacing:-0.2026px;">public class</span>
<span class="m" style="font-size:27px;line-height:27px;color:#080808;left:1244px;top:528.40px;letter-spacing:-0.2026px;"> Application {</span>
<span class="m" style="font-size:27px;line-height:27px;color:#0033b3;left:1116px;top:572.40px;letter-spacing:-0.2026px;">public static void</span>
<span class="m" style="font-size:27px;line-height:27px;color:#080808;left:1404px;top:572.40px;letter-spacing:-0.2026px;"> </span>
<span class="m" style="font-size:27px;line-height:27px;color:#00627a;left:1420px;top:572.40px;letter-spacing:-0.2026px;">main</span>
<span class="m" style="font-size:27px;line-height:27px;color:#080808;left:1484px;top:572.40px;letter-spacing:-0.2026px;">(String[] args) {</span>
<span class="m" style="font-size:27px;line-height:27px;color:#080808;left:1180px;top:616.40px;letter-spacing:-0.2026px;">ServiceConfig&lt;GreetingsService&gt; service = </span>
<span class="m" style="font-size:27px;line-height:27px;color:#0033b3;left:1852px;top:616.40px;letter-spacing:-0.2026px;">new</span>
<span class="m" style="font-size:27px;line-height:27px;color:#080808;left:1900px;top:616.40px;letter-spacing:-0.2026px;"> ServiceConfig&lt;&gt;();</span>
<span class="m" style="font-size:27px;line-height:27px;color:#080808;left:1180px;top:660.40px;letter-spacing:-0.2026px;">service.setInterface(GreetingsService.</span>
<span class="m" style="font-size:27px;line-height:27px;color:#0033b3;left:1788px;top:660.40px;letter-spacing:-0.2026px;">class</span>
<span class="m" style="font-size:27px;line-height:27px;color:#080808;left:1868px;top:660.40px;letter-spacing:-0.2026px;">);</span>
<span class="m" style="font-size:27px;line-height:27px;color:#080808;left:1180px;top:704.40px;letter-spacing:-0.2026px;">service.setRef(</span>
<span class="m" style="font-size:27px;line-height:27px;color:#0033b3;left:1420px;top:704.40px;letter-spacing:-0.2026px;">new</span>
<span class="m" style="font-size:27px;line-height:27px;color:#080808;left:1468px;top:704.40px;letter-spacing:-0.2026px;"> GreetingsServiceImpl());</span>
<span class="m" style="font-size:27px;line-height:27px;color:#080808;left:1180px;top:792.40px;letter-spacing:-0.2026px;">DubboBootstrap.</span>
<span class="m" style="font-size:27px;line-height:27px;color:#080808;font-style:italic;left:1420px;top:792.40px;letter-spacing:-0.2026px;">getInstance</span>
<span class="m" style="font-size:27px;line-height:27px;color:#080808;left:1596px;top:792.40px;letter-spacing:-0.2026px;">()</span>
<span class="m" style="font-size:27px;line-height:27px;color:#080808;left:1308px;top:836.40px;letter-spacing:-0.2026px;">.application(</span>
<div style="left:1520px;top:828px;width:90px;height:36px;border-radius:7px;background:#f4f4f4;"></div>
<span class="s" style="font-size:23px;line-height:23px;color:#7c7c7c;letter-spacing:0.713px;left:1531.25px;top:834.83px;">name:</span>
<span class="m" style="font-size:27px;line-height:27px;color:#067d17;left:1616px;top:836.40px;letter-spacing:-0.2026px;">&quot;first-dubbo-provider&quot;</span>
<span class="m" style="font-size:27px;line-height:27px;color:#080808;left:1968px;top:836.40px;letter-spacing:-0.2026px;">)</span>
<svg style="left:1727px;top:859.9px;" width="80" height="6" viewBox="0 0 80 6"><path d="M0 3 L4 0.8 L8 5.2 L12 0.8 L16 5.2 L20 0.8 L24 5.2 L28 0.8 L32 5.2 L36 0.8 L40 5.2 L44 0.8 L48 5.2 L52 0.8 L56 5.2 L60 0.8 L64 5.2 L68 0.8 L72 5.2 L76 0.8 L80 5.2" fill="none" stroke="#a3d09f" stroke-width="1.5"/></svg>
<span class="m" style="font-size:27px;line-height:27px;color:#080808;left:1308px;top:880.40px;letter-spacing:-0.2026px;">.registry(</span>
<span class="m" style="font-size:27px;line-height:27px;color:#0033b3;left:1468px;top:880.40px;letter-spacing:-0.2026px;">new</span>
<span class="m" style="font-size:27px;line-height:27px;color:#080808;left:1516px;top:880.40px;letter-spacing:-0.2026px;"> RegistryConfig(</span>
<div style="left:1776px;top:872px;width:118px;height:36px;border-radius:7px;background:#f4f4f4;"></div>
<span class="s" style="font-size:23px;line-height:23px;color:#7c7c7c;letter-spacing:1.060px;left:1786.65px;top:878.83px;">address:</span>
<span class="m" style="font-size:27px;line-height:27px;color:#067d17;left:1899px;top:880.40px;letter-spacing:-0.2026px;">&quot;zookeeper://127.0.0.1:2181&quot;</span>
<span class="m" style="font-size:27px;line-height:27px;color:#080808;left:2347px;top:880.40px;letter-spacing:-0.2026px;">))</span>
<span class="m" style="font-size:27px;line-height:27px;color:#080808;left:1308px;top:924.40px;letter-spacing:-0.2026px;">.protocol(</span>
<span class="m" style="font-size:27px;line-height:27px;color:#0033b3;left:1468px;top:924.40px;letter-spacing:-0.2026px;">new</span>
<span class="m" style="font-size:27px;line-height:27px;color:#080808;left:1516px;top:924.40px;letter-spacing:-0.2026px;"> ProtocolConfig(</span>
<div style="left:1776px;top:916px;width:90px;height:36px;border-radius:7px;background:#f4f4f4;"></div>
<span class="s" style="font-size:23px;line-height:23px;color:#7c7c7c;letter-spacing:0.713px;left:1787.25px;top:922.83px;">name:</span>
<span class="m" style="font-size:27px;line-height:27px;color:#067d17;left:1872px;top:924.40px;letter-spacing:-0.2026px;">&quot;dubbo&quot;</span>
<span class="m" style="font-size:27px;line-height:27px;color:#080808;left:1984px;top:924.40px;letter-spacing:-0.2026px;">,</span>
<svg style="left:1887px;top:947.9px;" width="80" height="6" viewBox="0 0 80 6"><path d="M0 3 L4 0.8 L8 5.2 L12 0.8 L16 5.2 L20 0.8 L24 5.2 L28 0.8 L32 5.2 L36 0.8 L40 5.2 L44 0.8 L48 5.2 L52 0.8 L56 5.2 L60 0.8 L64 5.2 L68 0.8 L72 5.2 L76 0.8 L80 5.2" fill="none" stroke="#a3d09f" stroke-width="1.5"/></svg>
<div style="left:2017.5px;top:916px;width:74px;height:36px;border-radius:7px;background:#f4f4f4;"></div>
<span class="s" style="font-size:23px;line-height:23px;color:#7c7c7c;letter-spacing:0.994px;left:2029.0px;top:922.83px;">port:</span>
<span class="m" style="font-size:27px;line-height:27px;color:#080808;left:2098.5px;top:924.40px;letter-spacing:-0.2026px;">-</span>
<span class="m" style="font-size:27px;line-height:27px;color:#1750eb;left:2114.5px;top:924.40px;letter-spacing:-0.2026px;">1</span>
<span class="m" style="font-size:27px;line-height:27px;color:#080808;left:2130.5px;top:924.40px;letter-spacing:-0.2026px;">))</span>
<span class="m" style="font-size:27px;line-height:27px;color:#080808;left:1308px;top:968.40px;letter-spacing:-0.2026px;">.service(service)</span>
<span class="m" style="font-size:27px;line-height:27px;color:#080808;left:1308px;top:1012.40px;letter-spacing:-0.2026px;">.start()</span>
<span class="m" style="font-size:27px;line-height:27px;color:#080808;left:1308px;top:1056.40px;letter-spacing:-0.2026px;">.await();</span>
<span class="m" style="font-size:27px;line-height:27px;color:#080808;left:1116px;top:1100.40px;letter-spacing:-0.2026px;">}</span>
<span class="m" style="font-size:27px;line-height:27px;color:#080808;left:1052px;top:1144.40px;letter-spacing:-0.2026px;">}</span>
<svg style="left:1030.8px;top:266px;" width="18" height="23" viewBox="0 0 18 23"><path d="M1 1 H17 V13 L9 21.5 L1 13 Z" fill="#fff" stroke="#c9c9c9" stroke-width="1.6"/><path d="M5 8.5 H13" stroke="#c9c9c9" stroke-width="1.6"/></svg>
<svg style="left:1030.8px;top:435px;" width="18" height="23" viewBox="0 0 18 23"><path d="M1 22 H17 V10 L9 1.5 L1 10 Z" fill="#fff" stroke="#c9c9c9" stroke-width="1.6"/><path d="M5 14.5 H13" stroke="#c9c9c9" stroke-width="1.6"/></svg>
<svg style="left:1030.8px;top:574px;" width="18" height="23" viewBox="0 0 18 23"><path d="M1 1 H17 V13 L9 21.5 L1 13 Z" fill="#fff" stroke="#c9c9c9" stroke-width="1.6"/><path d="M5 8.5 H13" stroke="#c9c9c9" stroke-width="1.6"/></svg>
<svg style="left:1030.8px;top:1095px;" width="18" height="23" viewBox="0 0 18 23"><path d="M1 22 H17 V10 L9 1.5 L1 10 Z" fill="#fff" stroke="#c9c9c9" stroke-width="1.6"/><path d="M5 14.5 H13" stroke="#c9c9c9" stroke-width="1.6"/></svg>
<svg style="left:985px;top:527.2px;" width="16" height="21.6" viewBox="0 0 16 21.6"><path d="M0 0 L16 10.8 L0 21.6 Z" fill="#59a869"/></svg>
<svg style="left:985px;top:571.2px;" width="16" height="21.6" viewBox="0 0 16 21.6"><path d="M0 0 L16 10.8 L0 21.6 Z" fill="#59a869"/></svg>
<svg style="left:3356px;top:178px;" width="30" height="28" viewBox="0 0 30 28"><path d="M5.5 11.7 L13.7 18.5 L26.2 4.2" fill="none" stroke="#59a869" stroke-width="4.6"/><path d="M4.4 24.9 L8.8 21 L12.7 24.9 L17.5 21 L21.4 24.9 L26.2 20.6" fill="none" stroke="#59a869" stroke-width="1.6"/></svg>
<span class="s" style="font-size:20.5px;line-height:20.5px;color:#666;left:3391px;top:180.65px;">2</span>
<svg style="left:3425.8px;top:185.8px;" width="17" height="10" viewBox="0 0 17 10"><path d="M1.5 8.5 L8.5 1.5 L15.5 8.5" fill="none" stroke="#5a5a5a" stroke-width="2.4"/></svg>
<svg style="left:3468.0px;top:185.8px;" width="17" height="10" viewBox="0 0 17 10"><path d="M1.5 1.5 L8.5 8.5 L15.5 1.5" fill="none" stroke="#5a5a5a" stroke-width="2.4"/></svg>
<div style="left:3479.5px;top:218.5px;width:14px;height:897px;border-radius:7px;background:rgba(120,120,120,0.42);"></div>
<div style="left:924px;top:1266px;width:2572px;height:2px;background:#d1d1d1;"></div>
<div style="left:36px;top:1266px;width:886px;height:2px;background:#d1d1d1;"></div>
<svg style="left:2329.5px;top:68px;" width="29" height="23" viewBox="0 0 29 23"><circle cx="18.5" cy="6.5" r="6" fill="#6e6e6e"/><path d="M9.5 23 Q10 13 18.5 13 Q28 13 28.5 23 Z" fill="#6e6e6e"/><circle cx="10.5" cy="7" r="6.6" fill="#f2f2f2"/><path d="M-1 24 Q0 12 10.5 12.5 Q21 12 22 24 Z" fill="#f2f2f2"/><circle cx="10" cy="7" r="5.6" fill="#6e6e6e"/><path d="M0.5 23 Q1 13.5 10 13.5 Q19.5 13.5 20 23 Z" fill="#6e6e6e"/></svg>
<svg style="left:2365px;top:78px;" width="15" height="8.5" viewBox="0 0 15 8.5"><path d="M0 0 H15 L7.5 8.5 Z" fill="#6e6e6e"/></svg>
<div style="left:2396px;top:60px;width:2px;height:40px;background:#d0d0d0;"></div>
<svg style="left:2410px;top:62px;" width="40" height="36" viewBox="0 0 40 36"><polygon points="2.6,13.5 19.5,2.1 23.8,8.5 6.9,19.9" fill="#59a869"/><polygon points="17.2,9.3 34.5,27.6 30.0,31.9 12.7,13.6" fill="#59a869"/></svg>
<div style="left:2468.5px;top:58px;width:227.5px;height:43.5px;box-sizing:border-box;border:2px solid #c4c4c4;border-radius:7px;background:#fff;"></div>
<svg style="left:2487px;top:65.5px;" width="32" height="32" viewBox="0 0 32 32"><g opacity="0.34"><rect x="5" y="0" width="23" height="18" fill="none" stroke="#b4bcc3" stroke-width="2"/><rect x="0" y="6" width="25" height="20" fill="#9aa7b0"/><rect x="2.5" y="10" width="20" height="13.5" fill="#8fd3ee"/></g><circle cx="26.5" cy="26.5" r="5" fill="#f2f2f2"/><circle cx="26.5" cy="26.5" r="4.2" fill="#1ed21e"/></svg>
<span class="s" style="font-size:22.5px;line-height:22.5px;color:#000;letter-spacing:0.557px;left:2527.3px;top:69.35px;">Application</span>
<svg style="left:2659.5px;top:76.3px;" width="18" height="9.7" viewBox="0 0 18 9.7"><path d="M0 0 H18 L9 9.7 Z" fill="#6e6e6e"/></svg>
<svg style="left:2720px;top:66px;" width="28" height="29" viewBox="0 0 28 29"><path d="M16.5 7.8 H11.2 A9.2 9.2 0 1 0 11.2 26.2" fill="none" stroke="#59a869" stroke-width="4.2"/><path d="M15.7 -0.2 L26.8 8 L15.7 15.8 Z" fill="#59a869"/><rect x="14" y="18" width="10.2" height="10.2" fill="#6e6e6e"/></svg>
<svg style="left:2772px;top:65.8px;" width="24" height="28.4" viewBox="0 0 24 28.4"><path d="M5.8 0.6 L11.7 6.4 M18.2 0.6 L12.3 6.4" stroke="#59a869" stroke-width="3"/><path d="M6.5 9 A5.6 4.6 0 0 1 17.5 9 Z" fill="#59a869"/><ellipse cx="12" cy="18" rx="8" ry="10.2" fill="#59a869"/><path d="M0 9.9 H24 M0 16.4 H24 M0 22.9 H24" stroke="#59a869" stroke-width="3.5"/><path d="M8.8 13.1 H15.2 M8.8 19.6 H15.2" stroke="#f2f2f2" stroke-width="3"/></svg>
<svg style="left:2822px;top:68px;" width="31" height="28" viewBox="0 0 31 28"><path d="M0 2.5 L10.5 0 L21 2.5 V12 Q21 19 10.5 23.5 Q0 19 0 12 Z" fill="#6e6e6e"/><path d="M10.5 2.8 L18.3 4.7 V12 Q18.3 17 10.5 20.6 Z" fill="#f2f2f2"/><path d="M12 7.5 L31.5 17.8 L12 28 Z" fill="#f2f2f2"/><path d="M15 11.5 L30 19.8 L15 28 Z" fill="#59a869"/></svg>
<svg style="left:2870px;top:67px;" width="31" height="29" viewBox="0 0 31 29"><circle cx="12.5" cy="12.5" r="10.8" fill="none" stroke="#6e6e6e" stroke-width="3"/><path d="M12.5 5.5 V13 L8 17.5" fill="none" stroke="#6e6e6e" stroke-width="2.6"/><path d="M12 8 L32 18.5 L12 29.5 Z" fill="#f2f2f2"/><path d="M15 12.5 L30.5 20.8 L15 29 Z" fill="#59a869"/></svg>
<svg style="left:2915px;top:78px;" width="15.5" height="8.5" viewBox="0 0 15.5 8.5"><path d="M0 0 H15.5 L7.75 8.5 Z" fill="#6e6e6e"/></svg>
<div style="left:2952.3px;top:70px;width:20px;height:20px;background:#db5860;"></div>
<div style="left:2994px;top:60px;width:2px;height:40px;background:#d0d0d0;"></div>
<span class="s" style="font-size:22px;line-height:22px;color:#000;letter-spacing:0.191px;left:3014.8px;top:69.38px;">Git:</span>
<svg style="left:3075px;top:68px;" width="24" height="23" viewBox="0 0 24 23"><path d="M22 2 L4 20" stroke="#389fd6" stroke-width="4"/><path d="M1 7 V22.5 H16.5 Z" fill="#389fd6"/></svg>
<svg style="left:3126px;top:67.5px;" width="28" height="24" viewBox="0 0 28 24"><path d="M1.5 13.5 L9.5 21 L26.5 2" fill="none" stroke="#59a869" stroke-width="4.2"/></svg>
<svg style="left:3178px;top:69px;" width="24" height="23" viewBox="0 0 24 23"><path d="M2 21 L20 3" stroke="#59a869" stroke-width="4"/><path d="M7 0.5 H23 V16.5 Z" fill="#59a869"/></svg>
<svg style="left:3228px;top:66px;" width="29" height="29" viewBox="0 0 29 29"><circle cx="14.3" cy="14" r="12.3" fill="none" stroke="#bdbdbd" stroke-width="3"/><path d="M14 6.5 V14.5 L19 17.5" fill="none" stroke="#bdbdbd" stroke-width="2.6"/></svg>
<svg style="left:3283px;top:66.5px;" width="26" height="26" viewBox="0 0 26 26"><path d="M4 8.5 H15.5 A8 8 0 0 1 15.5 24.5 H8.5" fill="none" stroke="#6e6e6e" stroke-width="3.4"/><path d="M10.5 1 L3 8.5 L10.5 16" fill="none" stroke="#6e6e6e" stroke-width="3.4"/></svg>
<div style="left:3326.5px;top:60px;width:2px;height:40px;background:#d0d0d0;"></div>
<svg style="left:3344px;top:66px;" width="34" height="28" viewBox="0 0 34 28"><path d="M1 5 H19 M10 0.5 V5 M15.5 5 Q13 15 2 20 M4.5 5 Q8 15 18 19" fill="none" stroke="#6e6e6e" stroke-width="2.6"/><path d="M17 28 L24.5 10 L32 28 M19.5 22.5 H29.5" fill="none" stroke="#2b7de0" stroke-width="3.4"/></svg>
<svg style="left:3398px;top:66px;" width="30" height="29" viewBox="0 0 30 29"><circle cx="11.5" cy="11.5" r="9" fill="none" stroke="#6e6e6e" stroke-width="3.8"/><path d="M18 18 L28 27.5" stroke="#6e6e6e" stroke-width="4.6"/></svg>
<div style="left:3449px;top:64.2px;width:31.5px;height:31.5px;border-radius:50%;background:#f0a30a;"></div>
<svg style="left:3455px;top:70px;" width="20" height="20" viewBox="0 0 20 20"><path d="M10 17 V6" stroke="#fff" stroke-width="3.6"/><path d="M2.5 10.5 L10 2.5 L17.5 10.5 Z" fill="#fff"/></svg>
<div style="left:36px;top:1268px;width:3460px;height:52px;background:#f2f2f2;"></div>
<div style="left:36px;top:1320px;width:3460px;height:2px;background:#d1d1d1;"></div>
<span class="s" style="font-size:24px;line-height:24px;color:#1a1a1a;letter-spacing:-0.401px;left:48.6px;top:1283.58px;">Run:</span>
<svg style="left:138px;top:1280px;" width="32" height="32" viewBox="0 0 32 32"><g opacity="1"><rect x="5" y="0" width="23" height="18" fill="none" stroke="#b4bcc3" stroke-width="2"/><rect x="0" y="6" width="25" height="20" fill="#9aa7b0"/><rect x="2.5" y="10" width="20" height="13.5" fill="#8fd3ee"/></g><circle cx="26.5" cy="26.5" r="5" fill="#f2f2f2"/><circle cx="26.5" cy="26.5" r="4.2" fill="#1ed21e"/></svg>
<span class="s" style="font-size:24px;line-height:24px;color:#1a1a1a;letter-spacing:0.662px;left:177.3px;top:1283.58px;">Application</span>
<svg style="left:316.5px;top:1288.7px;" width="15" height="15" viewBox="0 0 16 16"><path d="M1 1 L15 15 M15 1 L1 15" stroke="#b4bcc1" stroke-width="2.2" fill="none"/></svg>
<div style="left:112.5px;top:1316.5px;width:241px;height:5.5px;border-radius:3px;background:#a3adbf;"></div>
<svg style="left:3408px;top:1280px;" width="28" height="28" viewBox="0 0 28 28"><path d="M10.30 5.25 L11.12 1.32 L16.88 1.32 L17.70 5.25 L19.73 6.42 L23.54 5.17 L26.42 10.15 L23.43 12.83 L23.43 15.17 L26.42 17.85 L23.54 22.83 L19.73 21.58 L17.70 22.75 L16.88 26.68 L11.12 26.68 L10.30 22.75 L8.27 21.58 L4.46 22.83 L1.58 17.85 L4.57 15.17 L4.57 12.83 L1.58 10.15 L4.46 5.17 L8.27 6.42 Z M18.9 14 A4.9 4.9 0 1 0 9.1 14 A4.9 4.9 0 1 0 18.9 14 Z" fill="#7f7f7f" fill-rule="evenodd" stroke="#7f7f7f" stroke-width="0.6" stroke-linejoin="round"/></svg>
<div style="left:3462px;top:1292px;width:24px;height:4px;background:#7f7f7f;"></div>
<div style="left:36px;top:1322px;width:56px;height:612px;background:#f2f2f2;"></div>
<div style="left:92px;top:1322px;width:2px;height:612px;background:#d1d1d1;"></div>
<div style="left:94px;top:1322px;width:56px;height:612px;background:#f2f2f2;"></div>
<div style="left:150px;top:1322px;width:2px;height:612px;background:#d1d1d1;"></div>
<svg style="left:50px;top:1336px;" width="28" height="29" viewBox="0 0 28 29"><path d="M16.5 7.8 H11.2 A9.2 9.2 0 1 0 11.2 26.2" fill="none" stroke="#59a869" stroke-width="4.2"/><path d="M15.7 -0.2 L26.8 8 L15.7 15.8 Z" fill="#59a869"/><rect x="14" y="18" width="10.2" height="10.2" fill="#6e6e6e"/></svg>
<svg style="left:50px;top:1388px;" width="28" height="28" viewBox="0 0 28 28"><g transform="rotate(45 14 14)"><path d="M10 0.5 A7.2 7.2 0 1 0 18 0.5 V7 H10 Z" fill="#6e6e6e"/><rect x="10.8" y="11" width="6.4" height="19" fill="#6e6e6e"/></g></svg>
<div style="left:44.5px;top:1434px;width:39px;height:2px;background:#d0d0d0;"></div>
<div style="left:54px;top:1458.3px;width:20px;height:20px;background:#db5860;"></div>
<svg style="left:49px;top:1507px;" width="30" height="25" viewBox="0 0 30 25"><path d="M0 5 H7 L10 0.5 H20 L23 5 H30 V25 H0 Z" fill="#6e6e6e"/><circle cx="15" cy="14.5" r="7" fill="#f2f2f2"/><circle cx="15" cy="14.5" r="4" fill="#6e6e6e"/></svg>
<svg style="left:49.5px;top:1557px;" width="28" height="29" viewBox="0 0 28 29"><path d="M6 8 V1.5 H26.5 V27.5 H6 V21" fill="none" stroke="#6e6e6e" stroke-width="3"/><path d="M0 14.5 H16" stroke="#db5860" stroke-width="3.4"/><path d="M11 6.5 L19.5 14.5 L11 22.5 Z" fill="#db5860"/></svg>
<div style="left:44.5px;top:1604px;width:39px;height:2px;background:#d0d0d0;"></div>
<svg style="left:52px;top:1628px;" width="24" height="20" viewBox="0 0 24 20"><rect x="0" y="0" width="14" height="8.6" fill="#6e6e6e"/><rect x="16.2" y="0" width="7.8" height="8.6" fill="#6e6e6e"/><rect x="0" y="11" width="24" height="9" fill="#6e6e6e"/></svg>
<div style="left:44.5px;top:1670px;width:39px;height:2px;background:#d0d0d0;"></div>
<svg style="left:49.5px;top:1690px;" width="29" height="28" viewBox="0 0 29 28"><path d="M17 0 L29 12 L25.5 14 L21 13.5 L15.5 20 L16 24.5 L4.5 13 L9 13.5 L15.5 8 L15 3.5 Z" fill="#6e6e6e"/><path d="M10.5 18.5 L0 28" stroke="#6e6e6e" stroke-width="2.6"/></svg>
<svg style="left:113px;top:1339px;" width="18" height="25" viewBox="0 0 18 25"><path d="M9 24.5 V4" stroke="#6e6e6e" stroke-width="3.8"/><path d="M1.2 11.5 L9 3 L16.8 11.5" fill="none" stroke="#6e6e6e" stroke-width="3.8"/></svg>
<svg style="left:113px;top:1391.5px;" width="18" height="25" viewBox="0 0 18 25"><path d="M9 0.5 V21" stroke="#6e6e6e" stroke-width="3.8"/><path d="M1.2 13.5 L9 22 L16.8 13.5" fill="none" stroke="#6e6e6e" stroke-width="3.8"/></svg>
<svg style="left:109px;top:1443px;" width="27" height="27" viewBox="0 0 27 27"><path d="M0 1.6 H25" stroke="#6e6e6e" stroke-width="3.2"/><path d="M0 11.5 H20 A5.7 5.7 0 0 1 20 23 H13" fill="none" stroke="#6e6e6e" stroke-width="3"/><path d="M17 17.5 L11.5 23 L17 28.5" fill="none" stroke="#6e6e6e" stroke-width="3"/><path d="M0 22.5 H7" stroke="#6e6e6e" stroke-width="3.2"/></svg>
<div style="left:99.5px;top:1486.5px;width:44px;height:43.5px;border-radius:7px;background:#cfcfcf;"></div>
<svg style="left:109px;top:1495px;" width="27" height="27" viewBox="0 0 27 27"><path d="M0 25 H27" stroke="#6e6e6e" stroke-width="3.2"/><path d="M0 8.5 H8 M0 16.5 H10" stroke="#6e6e6e" stroke-width="3.2"/><path d="M19 0 V14" stroke="#6e6e6e" stroke-width="3.2"/><path d="M11.5 9.5 L19 17.5 L26.5 9.5" fill="none" stroke="#6e6e6e" stroke-width="3.2"/></svg>
<svg style="left:108px;top:1547.5px;" width="29" height="27" viewBox="0 0 29 27"><rect x="6.5" y="0" width="16" height="6" fill="#6e6e6e"/><path d="M0 8 H29 V21 H24 V14.5 H5 V21 H0 Z" fill="#6e6e6e"/><rect x="8" y="17" width="13" height="8.5" fill="none" stroke="#6e6e6e" stroke-width="2.6"/><circle cx="25" cy="11.5" r="1.3" fill="#f2f2f2"/></svg>
<svg style="left:111.5px;top:1597.5px;" width="21" height="26" viewBox="0 0 21 26"><rect x="6.5" y="0" width="8" height="3" fill="#6e6e6e"/><rect x="0" y="2.2" width="21" height="4" fill="#6e6e6e"/><path d="M1.8 8.2 H19.2 V23 Q19.2 26 16.2 26 H4.8 Q1.8 26 1.8 23 Z" fill="#6e6e6e"/></svg>
<div style="left:152px;top:1322px;width:3344px;height:612px;overflow:hidden;">
<span class="m" style="font-size:27px;line-height:27px;color:#080808;left:22px;top:7.50px;letter-spacing:-0.2026px;">15:51:40.065 [main] DEBUG org.apache.dubbo.config.AbstractConfig -  [DUBBO] Refreshing RegistryConfig[id=internal-metadata-registry] with prefix [dubbo.registries.internal-metadata-registry], extracted props: {address=zookeeper}</span>
<span class="m" style="font-size:27px;line-height:27px;color:#080808;left:22px;top:51.50px;letter-spacing:-0.2026px;">15:51:40.083 [main] DEBUG org.apache.dubbo.config.ServiceConfig -  [DUBBO] No valid ip found from environment, try to get local host., dubbo version: 3.2.0-beta.4, current host: 30.221.149.33</span>
<span class="m" style="font-size:27px;line-height:27px;color:#080808;left:22px;top:95.50px;letter-spacing:-0.2026px;">15:51:40.103 [main-SendThread(127.0.0.1:2181)] DEBUG org.apache.zookeeper.ClientCnxn - Reading reply session id: 0x10001b801330012, packet:: clientPath:null serverPath:null finished:false header:: 27,3  replyHeader:: 27,3</span>
<span class="m" style="font-size:27px;line-height:27px;color:#080808;left:22px;top:139.50px;letter-spacing:-0.2026px;">15:51:40.111 [main-SendThread(127.0.0.1:2181)] DEBUG org.apache.zookeeper.ClientCnxn - Reading reply session id: 0x10001b801330012, packet:: clientPath:null serverPath:null finished:false header:: 28,3  replyHeader:: 28,3</span>
<span class="m" style="font-size:27px;line-height:27px;color:#080808;left:22px;top:183.50px;letter-spacing:-0.2026px;">15:51:40.131 [main-SendThread(127.0.0.1:2181)] DEBUG org.apache.zookeeper.ClientCnxn - Reading reply session id: 0x10001b801330012, packet:: clientPath:null serverPath:null finished:false header:: 29,5  replyHeader:: 29,5</span>
<span class="m" style="font-size:27px;line-height:27px;color:#080808;left:22px;top:227.50px;letter-spacing:-0.2026px;">15:51:40.138 [main] INFO org.apache.dubbo.config.ServiceConfig -  [DUBBO] Export dubbo service org.apache.dubbo.metadata.MetadataService to local registry url : injvm://127.0.0.1/org.apache.dubbo.metadata.MetadataService?anyhost=true</span>
<span class="m" style="font-size:27px;line-height:27px;color:#080808;left:22px;top:271.50px;letter-spacing:-0.2026px;">15:51:40.138 [main] INFO org.apache.dubbo.config.ServiceConfig -  [DUBBO] Export dubbo service org.apache.dubbo.metadata.MetadataService to url dubbo://30.221.149.33:20880/org.apache.dubbo.metadata.MetadataService?anyhost=true</span>
<span class="m" style="font-size:27px;line-height:27px;color:#080808;left:22px;top:315.50px;letter-spacing:-0.2026px;">15:51:40.142 [main] INFO org.apache.dubbo.config.metadata.ConfigurableMetadataServiceExporter -  [DUBBO] The MetadataService exports urls : [dubbo://30.221.149.33:20880/org.apache.dubbo.metadata.MetadataService?anyhost=true</span>
<span class="m" style="font-size:27px;line-height:27px;color:#080808;left:22px;top:359.50px;letter-spacing:-0.2026px;">15:51:40.144 [main] INFO org.apache.dubbo.registry.client.metadata.ServiceInstanceMetadataUtils -  [DUBBO] Start registering instance address to registry., dubbo version: 3.2.0-beta.4, current host: 30.221.149.33</span>
<span class="m" style="font-size:27px;line-height:27px;color:#080808;left:22px;top:403.50px;letter-spacing:-0.2026px;">15:51:40.197 [main] INFO org.apache.dubbo.metadata.MetadataInfo -  [DUBBO] metadata revision changed: null -&gt; 7321c5e6dcc7dc5e2819f1edf872dcfe, app: first-dubbo-provider, services: 1, dubbo version: 3.2.0-beta.4, current host: 30.221.149.33</span>
<span class="m" style="font-size:27px;line-height:27px;color:#080808;left:22px;top:447.50px;letter-spacing:-0.2026px;">15:51:40.330 [main-SendThread(127.0.0.1:2181)] DEBUG org.apache.zookeeper.ClientCnxn - Reading reply session id: 0x10001b801330013, packet:: clientPath:null serverPath:null finished:false header:: 3,15  replyHeader:: 3,15</span>
<span class="m" style="font-size:27px;line-height:27px;color:#080808;left:22px;top:491.50px;letter-spacing:-0.2026px;">15:51:40.358 [main] INFO org.apache.dubbo.config.deploy.DefaultApplicationDeployer -  [DUBBO] Dubbo Application[1.1](first-dubbo-provider) is ready., dubbo version: 3.2.0-beta.4, current host: 30.221.149.33</span>
<span class="m" style="font-size:27px;line-height:27px;color:#080808;left:22px;top:535.50px;letter-spacing:-0.2026px;">15:51:40.359 [main] INFO org.apache.dubbo.config.bootstrap.DubboBootstrap -  [DUBBO] DubboBootstrap awaiting ..., dubbo version: 3.2.0-beta.4, current host: 30.221.149.33</span>
</div>
<div style="left:178px;top:1916px;width:84px;height:13px;border-radius:6.5px;background:#7f7f7f;"></div>
<div style="left:3472px;top:1322px;width:24px;height:612px;background:rgba(0,0,0,0.05);"></div>
<div style="left:3476px;top:1882px;width:26px;height:47px;border-radius:10px;background:#7a7a7a;"></div>
<div style="left:0px;top:1934px;width:3496px;height:2px;background:#d1d1d1;"></div>
<div style="left:0px;top:1936px;width:3496px;height:44px;background:#f2f2f2;"></div>
<div style="left:0px;top:1980px;width:3496px;height:2px;background:#cfcfcf;"></div>
<div style="left:0px;top:1982px;width:3496px;height:4px;background:#f2f2f2;"></div>
<div style="left:3354px;top:1982px;width:118px;height:4px;background:#b0b0b0;"></div>
<div style="left:3472px;top:1982px;width:24px;height:4px;background:#d4d4d4;"></div>
<div style="left:138px;top:1936px;width:109px;height:44px;background:#bdbdbd;"></div>
<svg style="left:58.5px;top:1946px;" width="19" height="25" viewBox="0 0 19 25"><circle cx="4" cy="3.6" r="3.4" fill="#6e6e6e"/><circle cx="4" cy="21.2" r="3.4" fill="#6e6e6e"/><circle cx="15" cy="7.5" r="3.4" fill="#6e6e6e"/><path d="M4 3.6 V21.2 M15 7.5 Q15 14 4 15.5" fill="none" stroke="#6e6e6e" stroke-width="2.8"/></svg>
<span class="s" style="font-size:22px;line-height:22px;color:#1f1f1f;letter-spacing:0.292px;left:90.4px;top:1946.98px;">Git</span>
<svg style="left:162px;top:1949px;" width="16" height="19.6" viewBox="0 0 16 19.6"><path d="M0 0 L16 9.8 L0 19.6 Z" fill="#6e6e6e"/></svg>
<div style="left:175.4px;top:1963.2px;width:10px;height:10px;border-radius:50%;background:#12dc12;box-shadow:0 0 0 1px #bdbdbd, inset 0 0 0 1px #3cae3c;"></div>
<span class="s" style="font-size:22px;line-height:22px;color:#1f1f1f;letter-spacing:-0.853px;left:193px;top:1946.98px;">Run</span>
<svg style="left:272px;top:1950px;" width="20" height="17" viewBox="0 0 20 17"><path d="M0 1.7 H4 M6.2 1.7 H20 M0 8.3 H4 M6.2 8.3 H20 M0 14.9 H4 M6.2 14.9 H20" stroke="#6e6e6e" stroke-width="3.4"/></svg>
<span class="s" style="font-size:22px;line-height:22px;color:#1f1f1f;letter-spacing:-0.639px;left:303.4px;top:1946.98px;">TODO</span>
<svg style="left:408px;top:1947.5px;" width="21" height="21" viewBox="0 0 21 21"><circle cx="10.5" cy="10.5" r="10.5" fill="#6e6e6e"/><path d="M10.5 4.5 V12" stroke="#f2f2f2" stroke-width="3"/><circle cx="10.5" cy="15.8" r="1.7" fill="#f2f2f2"/></svg>
<span class="s" style="font-size:22px;line-height:22px;color:#1f1f1f;letter-spacing:0.572px;left:440px;top:1946.98px;">Problems</span>
<svg style="left:581.5px;top:1947.5px;" width="23" height="21" viewBox="0 0 23 21"><rect x="0" y="0" width="23" height="21" fill="#6e6e6e"/><path d="M4 5 L9.5 10 L4 15 M11 15.5 H18" fill="none" stroke="#f2f2f2" stroke-width="2.2"/></svg>
<span class="s" style="font-size:22px;line-height:22px;color:#1f1f1f;letter-spacing:0.395px;left:614.7px;top:1946.98px;">Terminal</span>
<svg style="left:744px;top:1945.5px;" width="26" height="26" viewBox="0 0 26 26"><circle cx="11" cy="11" r="9.3" fill="none" stroke="#6e6e6e" stroke-width="2.4"/><path d="M11 5 V11.5 L7 15" fill="none" stroke="#6e6e6e" stroke-width="2.2"/><path d="M11 7 L27 16 L11 26 Z" fill="#f2f2f2"/><path d="M13.5 11.5 L25 18.5 L13.5 25.5 Z" fill="#6e6e6e"/></svg>
<span class="s" style="font-size:22px;line-height:22px;color:#1f1f1f;letter-spacing:0.589px;left:778.6px;top:1946.98px;">Profiler</span>
<svg style="left:896.5px;top:1945px;" width="27" height="27" viewBox="0 0 27 27"><path d="M11.5 4.5 A10.5 10.5 0 1 0 22.5 15.5" fill="none" stroke="#6e6e6e" stroke-width="2.4"/><path d="M14.5 1.2 A11 11 0 0 1 25.6 12.2 H14.5 Z" fill="none" stroke="#6e6e6e" stroke-width="2.4"/></svg>
<span class="s" style="font-size:22px;line-height:22px;color:#1f1f1f;letter-spacing:0.774px;left:934px;top:1946.98px;">Statistic</span>
<svg style="left:1061px;top:1945px;" width="26" height="26" viewBox="0 0 26 26"><circle cx="13" cy="13" r="11.6" fill="none" stroke="#6e6e6e" stroke-width="2.4"/><path d="M4.5 14 Q6.5 9.5 8.5 14 T12.5 14 T16.5 14 T20.5 14" fill="none" stroke="#6e6e6e" stroke-width="1.8"/></svg>
<span class="s" style="font-size:22px;line-height:22px;color:#1f1f1f;letter-spacing:0.490px;left:1096.4px;top:1946.98px;">SonarLint</span>
<svg style="left:1239px;top:1945px;" width="24" height="27" viewBox="0 0 24 27"><path d="M12 2.5 L21.5 8 V19 L12 24.5 L2.5 19 V8 Z" fill="none" stroke="#6e6e6e" stroke-width="1.6"/><path d="M12 2.5 L21.5 19 H2.5 Z" fill="none" stroke="#6e6e6e" stroke-width="1.6"/><circle cx="12" cy="2.6" r="2.4" fill="#6e6e6e"/><circle cx="21.5" cy="8" r="2.4" fill="#6e6e6e"/><circle cx="21.5" cy="19" r="2.4" fill="#6e6e6e"/><circle cx="12" cy="24.4" r="2.4" fill="#6e6e6e"/><circle cx="2.5" cy="19" r="2.4" fill="#6e6e6e"/><circle cx="2.5" cy="8" r="2.4" fill="#6e6e6e"/></svg>
<span class="s" style="font-size:22px;line-height:22px;color:#1f1f1f;letter-spacing:0.243px;left:1272.3px;top:1946.98px;">GraphQL</span>
<svg style="left:1408px;top:1946px;" width="25" height="24" viewBox="0 0 25 24"><path d="M6.5 0 H18.5 L25 12 L18.5 24 H6.5 L0 12 Z" fill="#6e6e6e"/><path d="M9.5 6 L18 12 L9.5 18 Z" fill="#f2f2f2"/></svg>
<span class="s" style="font-size:22px;line-height:22px;color:#1f1f1f;letter-spacing:0.455px;left:1442.7px;top:1946.98px;">Services</span>
<svg style="left:1572px;top:1945px;" width="26" height="26" viewBox="0 0 26 26"><g transform="rotate(-42 13 12)"><rect x="3" y="2" width="19" height="7.5" fill="#6e6e6e"/><path d="M3 2 L-1 5.7 L3 9.5 Z" fill="#6e6e6e"/><rect x="10" y="9.5" width="5" height="17" fill="#6e6e6e"/></g></svg>
<span class="s" style="font-size:22px;line-height:22px;color:#1f1f1f;letter-spacing:0.516px;left:1606.5px;top:1946.98px;">Build</span>
<svg style="left:1700.5px;top:1946px;" width="25" height="25" viewBox="0 0 25 25"><path d="M12.5 0 L25 6.5 L12.5 13 L0 6.5 Z" fill="#6e6e6e"/><path d="M2 11.5 L12.5 17 L23 11.5 M2 17 L12.5 22.5 L23 17" fill="none" stroke="#6e6e6e" stroke-width="2.4"/></svg>
<span class="s" style="font-size:22px;line-height:22px;color:#1f1f1f;letter-spacing:0.644px;left:1734.4px;top:1946.98px;">Dependencies</span>
<svg style="left:1930px;top:1946px;" width="25" height="23" viewBox="0 0 25 23"><path d="M1 17 Q-1 6 10 4 Q19 3 24 0 Q27 16 16 20 Q9 22.5 4 19 Z" fill="#6e6e6e"/><path d="M0.5 21.5 Q8 18 17 9" fill="none" stroke="#f2f2f2" stroke-width="1.6"/></svg>
<span class="s" style="font-size:22px;line-height:22px;color:#1f1f1f;letter-spacing:0.568px;left:1964.7px;top:1946.98px;">Spring</span>
<svg style="left:2071px;top:1945px;" width="27" height="27" viewBox="0 0 27 27"><circle cx="5" cy="21.5" r="5" fill="#6e6e6e"/><circle cx="22" cy="21.5" r="5" fill="#6e6e6e"/><circle cx="14" cy="5.5" r="5" fill="#6e6e6e"/><path d="M5 21.5 Q6 12 14 12 M22 21.5 L14 5.5" fill="none" stroke="#6e6e6e" stroke-width="3"/><path d="M4.5 21 Q8 13 15 13" fill="none" stroke="#6e6e6e" stroke-width="0"/></svg>
<span class="s" style="font-size:22px;line-height:22px;color:#1f1f1f;letter-spacing:0.571px;left:2106.5px;top:1946.98px;">Endpoints</span>
<div style="left:264.6px;top:594.7px;width:270.4px;height:55.69999999999993px;box-sizing:border-box;border:5.6px solid #ff0000;border-radius:10px;box-shadow:1px 4px 6px rgba(0,0,0,0.35);"></div>
<div style="left:913.7px;top:508.2px;width:123.79999999999995px;height:57.30000000000001px;box-sizing:border-box;border:6px solid #ff0000;border-radius:14px;box-shadow:1px 4px 6px rgba(0,0,0,0.35);"></div>
<div style="left:1393.3px;top:1838.8px;width:598.2px;height:71.0px;box-sizing:border-box;border:6px solid #ff0000;border-radius:10px;box-shadow:1px 4px 6px rgba(0,0,0,0.35);"></div>
<svg style="left:0px;top:0px;pointer-events:none;" width="3496" height="1986" viewBox="0 0 3496 1986"><defs><filter id="sh" x="-5%" y="-5%" width="110%" height="110%"><feDropShadow dx="1" dy="3" stdDeviation="2.5" flood-color="#000" flood-opacity="0.35"/></filter></defs><g filter="url(#sh)"><polygon points="573.9,623.9 887.3,565.5 886.3,560.0 573.1,619.5" fill="#ff0000"/><circle cx="573.5" cy="621.7" r="2.2" fill="#ff0000"/><path d="M864.6 555.2 L888.5 562.4 L868.8 577.8" fill="none" stroke="#ff0000" stroke-width="5.8" stroke-linecap="round" stroke-linejoin="round"/></g><g filter="url(#sh)"><polygon points="962.3,590.8 1685.3,1826.8 1691.8,1822.9 967.1,588.0" fill="#ff0000"/><circle cx="964.7" cy="589.4" r="2.8" fill="#ff0000"/><path d="M1688.9 1801.5 L1689.5 1826.5 L1668.0 1813.8" fill="none" stroke="#ff0000" stroke-width="6.4" stroke-linecap="round" stroke-linejoin="round"/></g></svg>
</div></body></html>
